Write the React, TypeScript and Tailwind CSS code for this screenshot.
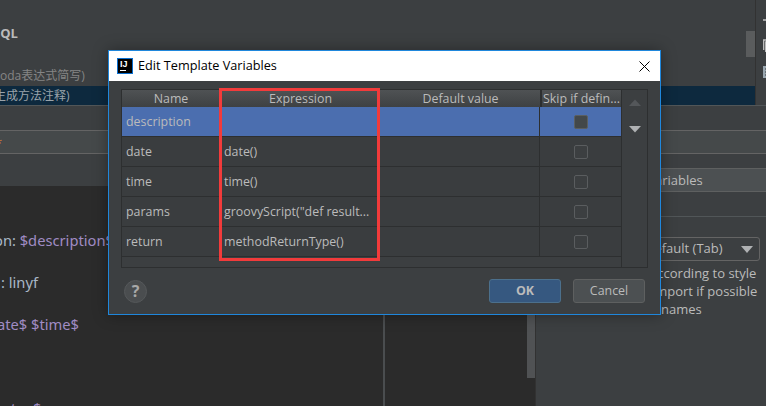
const rows = [
  { name: "description", expr: "", active: true },
  { name: "date", expr: "date()", active: false },
  { name: "time", expr: "time()", active: false },
  { name: "params", expr: 'groovyScript("def result...', active: false },
  { name: "return", expr: "methodReturnType()", active: false },
]

function Triangle({ color }: { color: string }) {
  return (
    <svg width="12" height="7" viewBox="0 0 12 7">
      <path d="M0 7L6 0.5L12 7Z" fill={color} />
    </svg>
  )
}

function Background() {
  return (
    <div className="flex flex-col h-full">
      {/* template list */}
      <div className="flex h-[106px] border-b border-[#515658]">
        <div className="relative w-[755px] pt-[25px] text-[12px]">
          <div className="h-[16px] leading-[16px] -ml-[7px] text-[13px] font-bold text-[#bbbbbb]">SQL</div>
          <div className="mt-[25px] h-[20px] leading-[20px] text-[#858585] whitespace-nowrap">oda表达式简写)</div>
          <div className="h-[19px] leading-[19px] bg-[#0d293e] text-[#9aa3aa] whitespace-nowrap">
            <div className="-ml-[6px]">生成方法注释)</div>
          </div>
          <div className="absolute left-[746px] top-[31px] w-[9px] h-[26px] bg-[#5a5c5d]" />
        </div>
        <div className="w-[11px] border-l border-[#323232] pl-[7px] pt-[18px]">
          <svg width="4" height="62" viewBox="0 0 4 62">
            <path d="M0 2H4" stroke="#c4c4c4" strokeWidth="1.5" />
            <path d="M0.7 32V22H4M2.7 34V24H4" stroke="#c4c4c4" strokeWidth="1.3" fill="none" />
            <rect x="0" y="48" width="4" height="12" fill="#9aa7b0" />
            <path d="M2 51H4M2 54H4M2 57H4" stroke="#3c3f41" />
          </svg>
        </div>
      </div>

      {/* abbreviation input */}
      <div className="pt-[24px]">
        <div className="h-[24px] bg-[#45494a] border-y border-[#646464] text-[13px] leading-[24px] text-[#cc7832] -ml-[5px]">*</div>
      </div>

      {/* editor and options */}
      <div className="flex flex-1 mt-[14px]">
        <div className="flex flex-col w-[536px]">
          <div className="h-[18px]" />
          <div className="flex flex-1 min-h-0">
            <div className="w-[383px] bg-[#2b2b2b] overflow-hidden pt-[33px] font-['Noto_Sans',sans-serif] text-[14.7px] leading-[42px] whitespace-pre text-[#a9b7c6]">
              <div className="-ml-[6px]">on: <span className="text-[#a08cc4]">$description$</span></div>
              <div className="ml-[1px]">: linyf</div>
              <div className="-ml-[3px] text-[#a08cc4]">ate$ $time$</div>
              <div className="h-[42px]" />
              <div className="ml-[11px] text-[#a08cc4]">tn  $</div>
            </div>
            <div className="w-[2px] bg-[#4a4d4f]" />
            <div className="flex-1 bg-[#2b2b2b] flex justify-end border-r border-[#323232]">
              <div className="w-[8px] h-[192px] bg-[#505254]" />
            </div>
          </div>
        </div>
        <div className="flex-1 text-[13px] text-[#bbbbbb]">
          <div className="h-[24px] bg-[#4c5052] border-y border-[#5e6060] leading-[22px] pl-[86px] whitespace-nowrap">Edit variables</div>
          <div className="mt-[24px] border-t border-[#515658]" />
          <div className="flex justify-end mt-[20px] mr-[6px]">
            <div className="flex items-center justify-between w-[180px] h-[24px] border border-[#646464] rounded-[3px] pl-[64px] pr-[6px]">
              <span>Default (Tab)</span>
              <svg width="12" height="7" viewBox="0 0 12 7"><path d="M0 0H12L6 7Z" fill="#afb1b3" /></svg>
            </div>
          </div>
          <div className="mt-[3px] pl-[54px] leading-[18px] whitespace-nowrap">Reformat according to style</div>
          <div className="pl-[54px] leading-[18px] whitespace-nowrap">Use static import if possible</div>
          <div className="flex items-center pl-[37px] h-[18px] leading-[18px]">
            <div className="w-[12px] h-[12px] border border-[#6b6b6b]" />
            <div className="ml-[56px] w-[12px] h-[12px] bg-[#aeb0b2]" />
            <span className="ml-[8px]">names</span>
          </div>
        </div>
      </div>
    </div>
  )
}

function Dialog() {
  return (
    <div className="absolute left-[108px] top-[50px] w-[553px] h-[265px] border border-[#1f87dc] bg-[#3c3f41] shadow-[0_0_14px_rgba(0,0,0,0.35)] flex flex-col text-[12.4px] text-[#bbbbbb]">
      {/* title bar */}
      <div className="flex items-center h-[30px] bg-white pl-[8px] pr-[10px] text-black">
        <div className="relative w-[16px] h-[16px] bg-black border border-[#0a6fd0] text-white text-[9px] font-bold leading-[10px] pl-[2px] font-['Liberation_Sans',sans-serif]">
          IJ
          <div className="absolute left-[2px] bottom-[2px] w-[6px] h-[1px] bg-white" />
        </div>
        <span className="ml-[5px] flex-1 text-[12.7px]">Edit Template Variables</span>
        <svg width="11" height="11" viewBox="0 0 11 11">
          <path d="M0.5 0.5L10.5 10.5M10.5 0.5L0.5 10.5" stroke="#000" strokeWidth="1" />
        </svg>
      </div>

      {/* variables table */}
      <div className="flex ml-[12px] mr-[12px] mt-[8px] h-[179px] border border-[#2d2f30]">
        <div className="w-[500px] border-r border-[#2d2f30]">
          <div className="grid grid-cols-[98px_161px_159px_82px] h-[17px] bg-gradient-to-b from-[#4f5254] to-[#3e4143] leading-[17px] text-center">
            <div>Name</div>
            <div>Expression</div>
            <div>Default value</div>
            <div className="whitespace-nowrap text-left pl-[1px] border-l-2 border-[#2d2f30]">Skip if defin...</div>
          </div>
          {rows.map((r) => (
            <div
              key={r.name}
              className={`grid grid-cols-[98px_319px_82px] w-[499px] h-[30px] border-b border-[#2d2f30] leading-[29px] ${r.active ? "bg-[#4b6eaf]" : "bg-[#3a3d3f]"}`}
            >
              <div className="pl-[4px]">{r.name}</div>
              <div className="pl-[4px] whitespace-nowrap">{r.expr}</div>
              <div className="flex items-center justify-center border-l border-[#2d2f30]">
                <div className={`w-[14px] h-[14px] rounded-[2px] border ${r.active ? "bg-[#43484a] border-[#5a5f61]" : "bg-[#3c3f41] border-[#5a5d5f]"}`} />
              </div>
            </div>
          ))}
        </div>
        <div className="flex flex-col items-center flex-1 pt-[9px] gap-[20px]">
          <Triangle color="#54575a" />
          <div className="rotate-180"><Triangle color="#afb1b3" /></div>
        </div>
      </div>

      {/* footer */}
      <div className="flex items-center mt-[11px] pl-[15px] pr-[15px]">
        <div className="w-[23px] h-[23px] rounded-full bg-[#4a4d4f] border border-[#55585a] flex items-center justify-center font-bold text-[16px] text-[#a8a8a8]">?</div>
        <div className="ml-auto flex gap-[12px]">
          <div className="w-[72px] h-[24px] rounded-[3px] bg-[#365880] border border-[#4c708c] font-bold text-center leading-[22px]">OK</div>
          <div className="w-[72px] h-[24px] rounded-[3px] bg-[#4c5052] border border-[#5e6060] text-center leading-[22px]">Cancel</div>
        </div>
      </div>

      {/* red annotation drawn over the screenshot */}
      <div className="absolute left-[110px] top-[37px] w-[161px] h-[173px] border-[3px] border-[#f23b3b]" />
    </div>
  )
}

export default function App() {
  return (
    <div className="relative w-[766px] h-[406px] overflow-hidden bg-[#3c3f41] font-['Open_Sans','Noto_Sans_CJK_SC',sans-serif]">
      <Background />
      <Dialog />
    </div>
  )
}
